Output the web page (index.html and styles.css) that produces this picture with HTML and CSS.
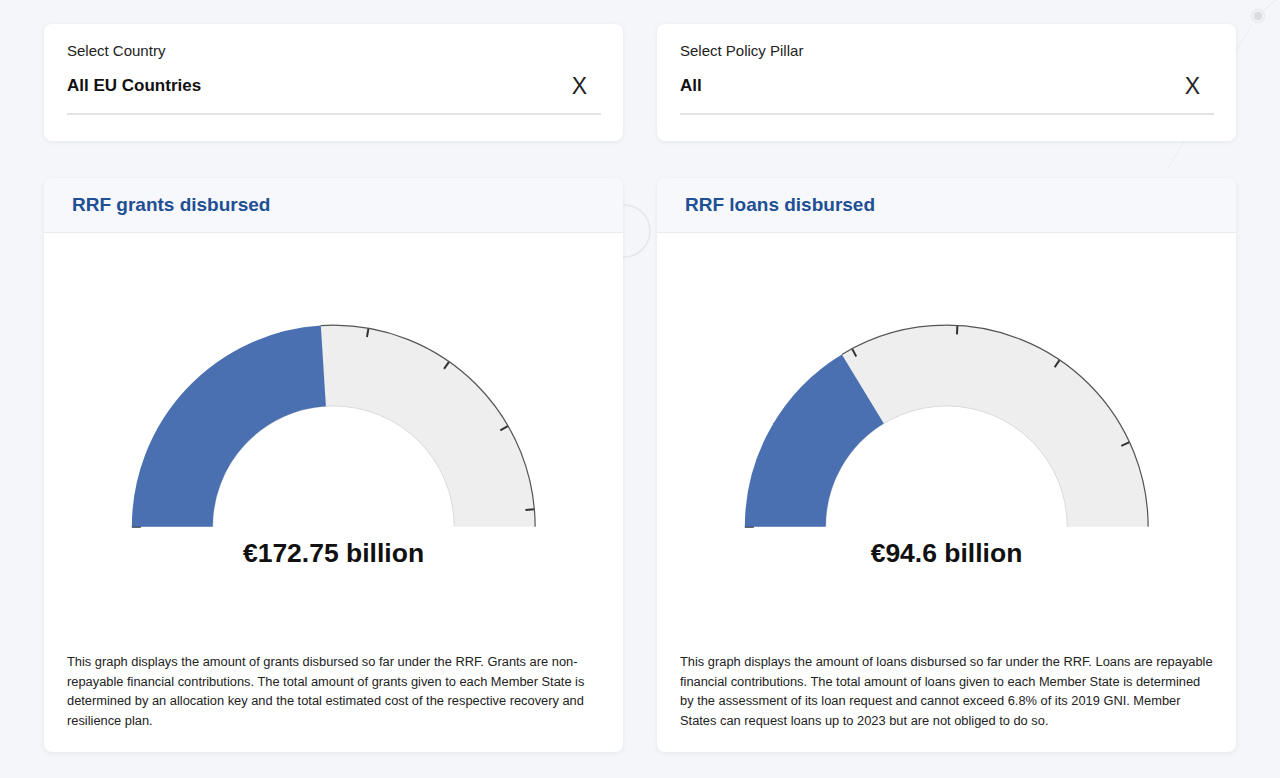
FILE: index.html
```html
<!DOCTYPE html>
<html lang="en">
  <head>
    <meta charset="UTF-8" />
    <title>RRF Disbursements</title>
    <link rel="stylesheet" href="styles.css">
  </head>
  <body>
    <!-- faint decoration behind the cards -->
    <svg class="backdrop" width="1280" height="778" viewBox="0 0 1280 778">
      <circle cx="624" cy="231" r="26" fill="none" stroke="#e4e7ec" stroke-width="1.5" />
      <line x1="1276" y1="0" x2="1264" y2="10" stroke="#e6e9ee" stroke-width="1" />
      <line x1="1252" y1="24" x2="1168" y2="168" stroke="#eceef2" stroke-width="1" />
      <circle cx="1258" cy="16" r="7" fill="#eef0f3" stroke="#e6e9ee" stroke-width="1" />
      <circle cx="1258" cy="16" r="4" fill="#d9dde3" />
    </svg>

    <div class="container">
      <!-- Filters -->
      <div class="card filter">
        <div class="filter-label">Select Country</div>
        <div class="filter-select">
          <span class="filter-value">All EU Countries</span>
          <span class="filter-clear">X</span>
        </div>
      </div>

      <div class="card filter">
        <div class="filter-label">Select Policy Pillar</div>
        <div class="filter-select">
          <span class="filter-value">All</span>
          <span class="filter-clear">X</span>
        </div>
      </div>

      <!-- Grants gauge -->
      <div class="card chart">
        <div class="chart-head"><h2>RRF grants disbursed</h2></div>
        <svg class="gauge" viewBox="0 0 580 305">
          <path class="gauge-track" d="M 128.5 294 A 161.5 161.5 0 0 1 451.5 294" />
          <path class="gauge-inner" d="M 169 294 A 121 121 0 0 1 411 294" />
          <g class="gauge-ticks">
            <line x1="88" y1="294" x2="97" y2="294" />
            <line x1="88" y1="294" x2="97" y2="294" transform="rotate(75 290 294)" />
            <line x1="88" y1="294" x2="97" y2="294" transform="rotate(100 290 294)" />
            <line x1="88" y1="294" x2="97" y2="294" transform="rotate(125 290 294)" />
            <line x1="88" y1="294" x2="97" y2="294" transform="rotate(150 290 294)" />
            <line x1="88" y1="294" x2="97" y2="294" transform="rotate(175 290 294)" />
          </g>
          <path class="gauge-fill" d="M 128.5 294 A 161.5 161.5 0 0 1 451.5 294" pathLength="360" stroke-dasharray="172.75 400" />
          <path class="gauge-rim" d="M 88 294 A 202 202 0 0 1 492 294" pathLength="360" stroke-dasharray="0 172.75 400" />
        </svg>
        <div class="chart-value">€172.75 billion</div>
        <p class="chart-note">
          This graph displays the amount of grants disbursed so far under the RRF. Grants are non-repayable
          financial contributions. The total amount of grants given to each Member State is determined by an
          allocation key and the total estimated cost of the respective recovery and resilience plan.
        </p>
      </div>

      <!-- Loans gauge -->
      <div class="card chart">
        <div class="chart-head"><h2>RRF loans disbursed</h2></div>
        <svg class="gauge" viewBox="0 0 580 305">
          <path class="gauge-track" d="M 128.5 294 A 161.5 161.5 0 0 1 451.5 294" />
          <path class="gauge-inner" d="M 169 294 A 121 121 0 0 1 411 294" />
          <g class="gauge-ticks">
            <line x1="88" y1="294" x2="97" y2="294" />
            <line x1="88" y1="294" x2="97" y2="294" transform="rotate(31.03 290 294)" />
            <line x1="88" y1="294" x2="97" y2="294" transform="rotate(62.07 290 294)" />
            <line x1="88" y1="294" x2="97" y2="294" transform="rotate(93.1 290 294)" />
            <line x1="88" y1="294" x2="97" y2="294" transform="rotate(124.14 290 294)" />
            <line x1="88" y1="294" x2="97" y2="294" transform="rotate(155.17 290 294)" />
          </g>
          <path class="gauge-fill" d="M 128.5 294 A 161.5 161.5 0 0 1 451.5 294" pathLength="290" stroke-dasharray="94.6 400" />
          <path class="gauge-rim" d="M 88 294 A 202 202 0 0 1 492 294" pathLength="290" stroke-dasharray="0 94.6 400" />
        </svg>
        <div class="chart-value">€94.6 billion</div>
        <p class="chart-note">
          This graph displays the amount of loans disbursed so far under the RRF. Loans are repayable financial
          contributions. The total amount of loans given to each Member State is determined by the assessment of
          its loan request and cannot exceed 6.8% of its 2019 GNI. Member States can request loans up to 2023 but
          are not obliged to do so.
        </p>
      </div>
    </div>
  </body>
</html>
```

FILE: styles.css
```css
body {
  font-family: "Liberation Sans", Arial, sans-serif;
  background: #f4f6f9;
  color: #111;
  margin: 0;
  position: relative;
  min-height: 778px;
}

.backdrop {
  position: absolute;
  top: 0;
  left: 0;
  z-index: 0;
  pointer-events: none;
}

.container {
  position: relative;
  z-index: 1;
  display: grid;
  grid-template-columns: 1fr 1fr;
  column-gap: 34px;
  row-gap: 37px;
  padding: 24px 44px 0;
}

.card {
  background: white;
  border-radius: 8px;
  box-shadow: 0 1px 5px rgba(30, 40, 60, 0.07);
}

/* Filters */
.filter {
  height: 117px;
  box-sizing: border-box;
  padding: 18px 22px 0 23px;
}

.filter-label {
  font-size: 15px;
  line-height: 18px;
  color: #222;
}

.filter-select {
  margin-top: 8px;
  height: 36px;
  padding-bottom: 9px;
  display: flex;
  align-items: center;
  justify-content: space-between;
  border-bottom: 2px solid #e3e4e7;
}

.filter-value {
  font-size: 17px;
  font-weight: bold;
  color: #111;
}

.filter-clear {
  font-size: 23px;
  color: #222;
  margin-right: 14px;
}

/* Gauge cards */
.chart {
  height: 574px;
  display: flex;
  flex-direction: column;
  overflow: hidden;
}

.chart-head {
  height: 55px;
  box-sizing: border-box;
  padding: 0 28px;
  display: flex;
  align-items: center;
  background: #f6f8fb;
  border-bottom: 1px solid #e7eaef;
}

.chart-head h2 {
  margin: 0;
  font-size: 19px;
  color: #1f4f94;
}

.gauge {
  display: block;
  width: 100%;
  height: 305px;
}

.gauge-track {
  fill: none;
  stroke: #eeeeee;
  stroke-width: 81;
}

.gauge-inner {
  fill: none;
  stroke: #dadada;
  stroke-width: 1;
}

.gauge-ticks line {
  stroke: #333;
  stroke-width: 2;
}

.gauge-fill {
  fill: none;
  stroke: #4a70b2;
  stroke-width: 81;
}

.gauge-rim {
  fill: none;
  stroke: #555;
  stroke-width: 1.2;
}

.chart-value {
  text-align: center;
  font-size: 26.5px;
  font-weight: bold;
  line-height: 30px;
  color: #111;
}

.chart-note {
  margin: auto 0 0;
  padding: 0 20px 22px 23px;
  font-size: 12.85px;
  line-height: 19.5px;
  color: #222;
}
```
